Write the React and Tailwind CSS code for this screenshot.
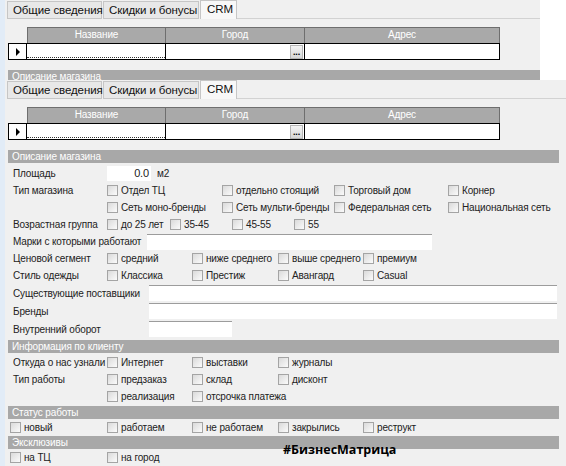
import React from 'react'

const tabs = ['Общие сведения', 'Скидки и бонусы', 'CRM']

function Tabs() {
    return (
        <div className="flex h-[19px] items-end whitespace-nowrap pl-[2px] text-[11.5px] tracking-[-0.1px] text-[#111]">
            <div className="h-[18px] w-[95px] border border-[#c6c6c6] bg-[#e8e8e8] pl-[5px] leading-[16px]">{tabs[0]}</div>
            <div className="ml-[1px] h-[18px] w-[96px] border border-[#c6c6c6] bg-[#e8e8e8] pl-[5px] leading-[16px]">{tabs[1]}</div>
            <div className="ml-[1px] h-[19px] w-[37px] border border-b-0 border-[#c6c6c6] bg-[#f8f8f8] pl-[6px] leading-[17px]">{tabs[2]}</div>
            <div className="h-px flex-1 bg-[#d2d2d2]" />
        </div>
    )
}

function Grid() {
    return (
        <div className="mt-[8px] ml-[3px] w-[492px]">
            <div className="flex h-[16px]">
                <div className="w-[19px]" />
                <div className="flex flex-1 border border-b-0 border-[#6e6e6e] bg-[#a9a9a9] text-[10px] leading-[14px] text-white">
                    <div className="w-[138px] border-r border-[#6e6e6e] text-center">Название</div>
                    <div className="w-[139px] border-r border-[#6e6e6e] text-center">Город</div>
                    <div className="flex-1 text-center">Адрес</div>
                </div>
            </div>
            <div className="flex h-[17px] border border-black bg-white">
                <div className="flex w-[18px] items-center justify-center border-r border-black">
                    <div className="h-0 w-0 border-y-[4px] border-l-[4px] border-y-transparent border-l-black" />
                </div>
                <div className="w-[139px] border-r border-black pb-[1px]">
                    <div className="h-full border-b border-dotted border-[#333]" />
                </div>
                <div className="flex w-[139px] justify-end border-r border-black pr-[1px]">
                    <div className="mt-px flex h-[14px] w-[13px] items-center justify-center border border-[#b5b5b5] bg-gradient-to-b from-[#f4f4f4] to-[#d6d6d6] text-[9px] font-bold leading-[6px] text-black">...</div>
                </div>
                <div className="flex-1" />
            </div>
        </div>
    )
}

function Bar({ children, className }) {
    return (
        <div className={`ml-[3px] h-[13px] whitespace-nowrap bg-[#a8a8a8] pl-[4px] text-[10px] leading-[13px] text-white ${className}`}>{children}</div>
    )
}

function Window({ barWidth }) {
    return (
        <div>
            <Tabs />
            <Grid />
            <Bar className={`mt-[10px] ${barWidth}`}>Описание магазина</Bar>
        </div>
    )
}

function Check({ label, className }) {
    return (
        <div className={`flex shrink-0 items-center gap-[3px] whitespace-nowrap ${className}`}>
            <div className="h-[11px] w-[11px] shrink-0 border border-[#a4a4a4] bg-gradient-to-br from-[#dadada] to-[#fbfbfb]" />
            <span>{label}</span>
        </div>
    )
}

function Row({ label, h = 'h-[17px]', children }) {
    return (
        <div className={`flex items-center pl-[8px] ${h}`}>
            <div className="w-[94px] shrink-0 whitespace-nowrap">{label}</div>
            {children}
        </div>
    )
}

function Field({ className }) {
    return <div className={`h-[16px] border-t border-[#9c9c9c] bg-white ${className}`} />
}

export default function App() {
    return (
        <div className="relative flex h-[466px] w-[566px] overflow-hidden bg-white font-['Liberation_Sans',Arial,sans-serif] text-[10px] tracking-[-0.15px] text-[#222]">
            <div className="w-[5px] shrink-0 bg-[#e2ecf7]" />
            <div className="flex flex-1 flex-col">
                <div className="h-[81px] w-[535px] overflow-hidden bg-[#f0f0f0]">
                    <Window barWidth="w-[532px]" />
                </div>
                <div className="flex-1 bg-[#f0f0f0]">
                    <Window barWidth="w-[551px]" />
                    <div className="pt-[2px]">
                        <Row label="Площадь">
                            <div className="h-[15px] w-[44px] bg-white pr-[2px] text-right text-[11px] leading-[15px]">0.0</div>
                            <span className="ml-[6px]">м2</span>
                        </Row>
                        <Row label="Тип магазина">
                            <Check className="w-[115px]" label="Отдел ТЦ" />
                            <Check className="w-[112px]" label="отдельно стоящий" />
                            <Check className="w-[114px]" label="Торговый дом" />
                            <Check label="Корнер" />
                        </Row>
                        <Row label="">
                            <Check className="w-[115px]" label="Сеть моно-бренды" />
                            <Check className="w-[112px]" label="Сеть мульти-бренды" />
                            <Check className="w-[114px]" label="Федеральная сеть" />
                            <Check label="Национальная сеть" />
                        </Row>
                        <Row label="Возрастная группа">
                            <Check className="w-[63px]" label="до 25 лет" />
                            <Check className="w-[62px]" label="35-45" />
                            <Check className="w-[62px]" label="45-55" />
                            <Check label="55" />
                        </Row>
                        <div className="flex h-[17px] items-center pl-[8px]">
                            <div className="w-[134px] shrink-0 whitespace-nowrap">Марки с которыми работают</div>
                            <Field className="w-[285px]" />
                        </div>
                        <Row label="Ценовой сегмент">
                            <Check className="w-[85px]" label="средний" />
                            <Check className="w-[86px]" label="ниже среднего" />
                            <Check className="w-[85px]" label="выше среднего" />
                            <Check label="премиум" />
                        </Row>
                        <Row label="Стиль одежды">
                            <Check className="w-[85px]" label="Классика" />
                            <Check className="w-[86px]" label="Престиж" />
                            <Check className="w-[85px]" label="Авангард" />
                            <Check label="Casual" />
                        </Row>
                        <div className="flex h-[18px] items-center pl-[8px]">
                            <div className="w-[136px] shrink-0 whitespace-nowrap">Существующие поставщики</div>
                            <Field className="w-[408px]" />
                        </div>
                        <div className="flex h-[18px] items-center pl-[8px]">
                            <div className="w-[136px] shrink-0">Бренды</div>
                            <Field className="w-[408px]" />
                        </div>
                        <div className="flex h-[18px] items-center pl-[8px]">
                            <div className="w-[136px] shrink-0">Внутренний оборот</div>
                            <Field className="w-[83px]" />
                        </div>
                    </div>
                    <Bar className="mt-[2px] w-[551px]">Информация по клиенту</Bar>
                    <Row label="Откуда о нас узнали" h="h-[18px]">
                        <Check className="w-[85px]" label="Интернет" />
                        <Check className="w-[86px]" label="выставки" />
                        <Check label="журналы" />
                    </Row>
                    <Row label="Тип работы">
                        <Check className="w-[85px]" label="предзаказ" />
                        <Check className="w-[86px]" label="склад" />
                        <Check label="дисконт" />
                    </Row>
                    <Row label="">
                        <Check className="w-[85px]" label="реализация" />
                        <Check label="отсрочка платежа" />
                    </Row>
                    <Bar className="mt-[1px] w-[551px]">Статус работы</Bar>
                    <div className="flex h-[17px] items-center pl-[5px]">
                        <Check className="w-[97px]" label="новый" />
                        <Check className="w-[85px]" label="работаем" />
                        <Check className="w-[86px]" label="не работаем" />
                        <Check className="w-[85px]" label="закрылись" />
                        <Check label="реструкт" />
                    </div>
                    <Bar className="w-[551px]">Эксклюзивы</Bar>
                    <div className="flex h-[17px] items-center pl-[5px]">
                        <Check className="w-[97px]" label="на ТЦ" />
                        <Check label="на город" />
                    </div>
                </div>
            </div>
            <div className="absolute left-[283px] top-[441px] font-['Open_Sans',sans-serif] text-[12.5px] font-bold leading-[18px] tracking-normal text-black">#БизнесМатрица</div>
        </div>
    )
}
